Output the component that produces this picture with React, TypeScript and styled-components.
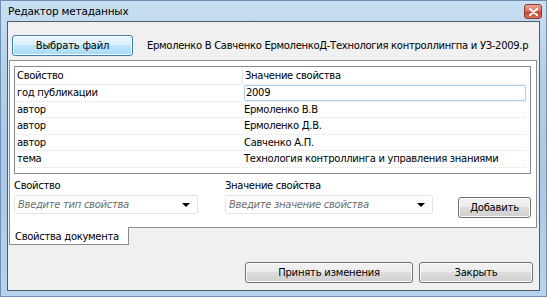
import React from 'react';
import styled, { createGlobalStyle, css } from 'styled-components';

const GlobalStyle = createGlobalStyle`
  html, body {
    margin: 0;
    padding: 0;
    background: #ffffff;
  }
  body {
    font-family: "DejaVu Sans", "Liberation Sans", sans-serif;
    font-size: 10px;
    letter-spacing: -0.3px;
    color: #000000;
  }
`;

const Window = styled.div`
  box-sizing: border-box;
  width: 547px;
  height: 297px;
  display: flex;
  flex-direction: column;
  background: linear-gradient(180deg, #c9dff3 0%, #b3cfeb 25%, #a9c8e7 60%, #b8d3ee 100%);
  border: 1px solid #6f8fb3;
`;

const TitleBar = styled.div`
  height: 20px;
  flex-shrink: 0;
  display: flex;
  align-items: center;
  justify-content: space-between;
  padding: 0 4px 0 7px;
`;

const Caption = styled.span`
  font-size: 10.5px;
  color: #000000;
  letter-spacing: -0.2px;
`;

const CloseButton = styled.div`
  width: 16px;
  height: 13px;
  margin-top: 1px;
  display: flex;
  align-items: center;
  justify-content: center;
  border: 1px solid #8a3b33;
  border-radius: 3px;
  background: linear-gradient(180deg, #e9a99c 0%, #d8705f 45%, #c4422e 55%, #d9735a 100%);
`;

const Client = styled.div`
  flex: 1;
  margin: 0 6px 5px 6px;
  display: flex;
  flex-direction: column;
  border: 1px solid #4d5c6b;
  background: #f0f0f0;
  min-height: 0;
`;

const FileRow = styled.div`
  display: flex;
  align-items: center;
  gap: 14px;
  padding: 12px 0 0 4px;
  height: 22px;
`;

const Button = styled.button<{ $focused?: boolean; $width: number }>`
  box-sizing: border-box;
  width: ${p => p.$width}px;
  height: 21px;
  flex-shrink: 0;
  padding: 0;
  font-family: inherit;
  font-size: 10px;
  letter-spacing: -0.2px;
  color: #000000;
  border-radius: 3px;
  border: 1px solid #707070;
  box-shadow: inset 0 0 0 1px #fcfcfc;
  background: linear-gradient(180deg, #f2f2f2 0%, #ebebeb 49%, #dddddd 50%, #cfcfcf 100%);
  ${p =>
    p.$focused &&
    css`
      border-color: #3c7fb1;
      background: linear-gradient(180deg, #eaf6fd 0%, #d9f0fc 49%, #bee6fd 50%, #a7d9f5 100%);
    `}
`;

const FileName = styled.span`
  flex: 1;
  white-space: nowrap;
  overflow: hidden;
  font-size: 10px;
`;

const TabPage = styled.div`
  margin: 4px 2px 0 1px;
  height: 168px;
  box-sizing: border-box;
  flex-shrink: 0;
  background: #ffffff;
  border: 1px solid #898c95;
  padding: 5px 5px 0 4px;
  display: flex;
  flex-direction: column;
`;

const Grid = styled.div`
  box-sizing: border-box;
  height: 108px;
  border: 1px solid #828790;
  display: flex;
  flex-direction: column;
  padding-right: 4px;
`;

const GridRow = styled.div<{ $header?: boolean }>`
  display: grid;
  grid-template-columns: 227px 1fr;
  height: ${p => (p.$header ? 18 : 16.5)}px;
  align-items: center;
  border-bottom: 1px dotted #e2e2e2;
  box-sizing: border-box;
`;

const Cell = styled.div<{ $divider?: boolean }>`
  height: 100%;
  display: flex;
  align-items: center;
  padding-left: 2px;
  white-space: nowrap;
  overflow: hidden;
  box-sizing: border-box;
  ${p =>
    p.$divider &&
    css`
      border-left: 1px solid #e6e6e6;
    `}
`;

const EditCell = styled(Cell)`
  border: 1px solid #a6cfee;
  border-radius: 2px;
  margin-left: 2px;
  padding-left: 1px;
`;

const EditorRow = styled.div`
  display: flex;
  align-items: flex-start;
  margin-top: 6px;
`;

const Field = styled.div<{ $width: number }>`
  display: flex;
  flex-direction: column;
  width: ${p => p.$width}px;
  gap: 3px;
`;

const FieldLabel = styled.span`
  height: 12px;
  line-height: 12px;
  font-size: 10px;
`;

const Combo = styled.div`
  box-sizing: border-box;
  height: 19px;
  display: flex;
  align-items: center;
  justify-content: space-between;
  padding: 0 7px 0 3px;
  border: 1px dotted #c8ccd2;
  border-radius: 2px;
  background: #ffffff;
`;

const Placeholder = styled.span`
  font-style: italic;
  color: #6d6d6d;
  font-size: 10px;
`;

const Arrow = styled.span`
  width: 0;
  height: 0;
  border-left: 4px solid transparent;
  border-right: 4px solid transparent;
  border-top: 4px solid #000000;
`;

const AddButtonSlot = styled.div`
  margin: 17px 0 0 auto;
`;

const TabStrip = styled.div`
  display: flex;
  padding-left: 1px;
  flex-shrink: 0;
`;

const Tab = styled.div`
  box-sizing: border-box;
  width: 120px;
  height: 18px;
  margin-top: -1px;
  padding: 4px 0 0 5px;
  background: #ffffff;
  border: 1px solid #898c95;
  border-top: none;
  font-size: 10px;
  white-space: nowrap;
`;

const Footer = styled.div`
  flex: 1;
  display: flex;
  justify-content: flex-end;
  align-items: flex-start;
  gap: 6px;
  padding: 17px 6px 0 0;
`;

const properties = [
  { name: 'год публикации', value: '2009', editing: true },
  { name: 'автор', value: 'Ермоленко В.В' },
  { name: 'автор', value: 'Ермоленко Д.В.' },
  { name: 'автор', value: 'Савченко А.П.' },
  { name: 'тема', value: 'Технология контроллинга и управления знаниями' },
];

const CloseIcon = () => (
  <svg width="9" height="8" viewBox="0 0 9 8">
    <path d="M1 1 L8 7 M8 1 L1 7" stroke="#ffffff" strokeWidth="2" strokeLinecap="round" />
  </svg>
);

export default function App() {
  return (
    <>
      <GlobalStyle />
      <Window>
        <TitleBar>
          <Caption>Редактор метаданных</Caption>
          <CloseButton>
            <CloseIcon />
          </CloseButton>
        </TitleBar>
        <Client>
          <FileRow>
            <Button $focused $width={121}>Выбрать файл</Button>
            <FileName>Ермоленко В Савченко ЕрмоленкоД-Технология контроллингпа и УЗ-2009.р</FileName>
          </FileRow>
          <TabPage>
            <Grid>
              <GridRow $header>
                <Cell>Свойство</Cell>
                <Cell $divider>Значение свойства</Cell>
              </GridRow>
              {properties.map((p, i) => (
                <GridRow key={i}>
                  <Cell>{p.name}</Cell>
                  {p.editing ? <EditCell>{p.value}</EditCell> : <Cell>{p.value}</Cell>}
                </GridRow>
              ))}
            </Grid>
            <EditorRow>
              <Field $width={184} style={{ marginRight: 27 }}>
                <FieldLabel>Свойство</FieldLabel>
                <Combo>
                  <Placeholder>Введите тип свойства</Placeholder>
                  <Arrow />
                </Combo>
              </Field>
              <Field $width={208}>
                <FieldLabel>Значение свойства</FieldLabel>
                <Combo>
                  <Placeholder>Введите значение свойства</Placeholder>
                  <Arrow />
                </Combo>
              </Field>
              <AddButtonSlot>
                <Button $width={73}>Добавить</Button>
              </AddButtonSlot>
            </EditorRow>
          </TabPage>
          <TabStrip>
            <Tab>Свойства документа</Tab>
          </TabStrip>
          <Footer>
            <Button $width={168}>Принять изменения</Button>
            <Button $width={114}>Закрыть</Button>
          </Footer>
        </Client>
      </Window>
    </>
  );
}
